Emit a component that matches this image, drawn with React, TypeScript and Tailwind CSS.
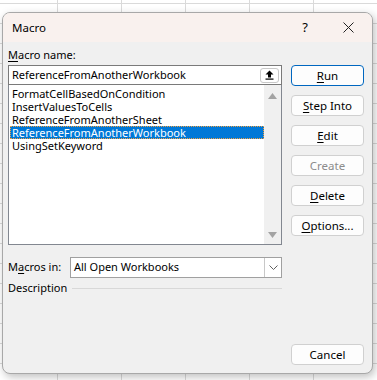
import React from 'react';

const font = { fontFamily: '"Noto Sans", "Segoe UI", Arial, sans-serif' };

function Btn({ label, u, primary, disabled }: { label: string; u?: number; primary?: boolean; disabled?: boolean }) {
  const text =
    u === undefined ? (
      label
    ) : (
      <>
        {label.slice(0, u)}
        <span className="underline underline-offset-2">{label[u]}</span>
        {label.slice(u + 1)}
      </>
    );
  return (
    <div
      className={
        'h-[21px] w-[73px] rounded-[4px] border bg-[#fdfdfd] flex items-center justify-center text-[11.5px] leading-none ' +
        (primary ? 'border-[#0067c0] ' : 'border-[#d0d0d0] ') +
        (disabled ? 'text-[#8c8c8c]' : 'text-black')
      }
    >
      {text}
    </div>
  );
}

const macros = [
  'FormatCellBasedOnCondition',
  'InsertValuesToCells',
  'ReferenceFromAnotherSheet',
  'ReferenceFromAnotherWorkbook',
  'UsingSetKeyword',
];

export default function App() {
  return (
    <div
      style={font}
      className="w-[377px] h-[380px] overflow-hidden bg-white pt-[12px] pl-[2px] bg-[linear-gradient(to_right,#dadada_1px,transparent_1px),linear-gradient(to_bottom,#dadada_1px,transparent_1px)] bg-[size:64px_20px] bg-[position:57px_3px]"
    >
      <div className="w-[371px] h-[362px] rounded-[8px] border border-[#a8a8a8] bg-[#f0f0f0] shadow-[2px_3px_8px_rgba(0,0,0,0.25)] flex flex-col overflow-hidden">
        {/* title bar */}
        <div className="h-[29px] bg-[#f9f1ee] flex items-center pl-[9px] text-[11.5px] text-black shrink-0">
          <span className="pt-[1px]">Macro</span>
          <span className="ml-auto mr-[35px] text-[13px]">?</span>
          <svg width="11" height="11" viewBox="0 0 11 11" className="mr-[18px]">
            <path d="M0.5 0.5 L10.5 10.5 M10.5 0.5 L0.5 10.5" stroke="#222" strokeWidth="1" />
          </svg>
        </div>

        {/* body */}
        <div className="flex flex-1 pl-[5px] text-[11px]">
          <div className="w-[274px] flex flex-col">
            <div className="h-[23px] flex items-center text-black pt-[3px]">
              <span className="underline underline-offset-2">M</span>acro name:
            </div>
            <div className="h-[20px] border border-[#7a7a7a] bg-white flex items-center pl-[3px] text-black">
              <span className="flex-1">ReferenceFromAnotherWorkbook</span>
              <div className="w-[19px] h-[15px] mr-[2px] rounded-[3px] border border-[#c8c8c8] bg-white flex items-center justify-center">
                <svg width="9" height="10" viewBox="0 0 9 10">
                  <path d="M4.5 0.5 L8.5 4.5 L6 4.5 L6 7.5 L3 7.5 L3 4.5 L0.5 4.5 Z" fill="#000" />
                  <rect x="0.5" y="8.5" width="8" height="1.2" fill="#000" />
                </svg>
              </div>
            </div>
            <div className="h-[160px] border border-t-0 border-[#828790] bg-white flex">
              <div className="flex-1 pt-[2px] pl-[1px] text-black">
                {macros.map((m, i) =>
                  i === 3 ? (
                    <div
                      key={m}
                      className="h-[13px] leading-[13px] pl-[2px] bg-[#0078d7] text-white outline outline-1 outline-dotted outline-[#f0a040] -outline-offset-1"
                    >
                      {m}
                    </div>
                  ) : (
                    <div key={m} className="h-[13px] leading-[13px] pl-[2px]">
                      {m}
                    </div>
                  )
                )}
              </div>
              <div className="w-[17px] bg-[#f0f0f0] flex flex-col items-center justify-between pt-[8px] pb-[6px]">
                <svg width="9" height="6" viewBox="0 0 9 6">
                  <path d="M4.5 0 L9 6 L0 6 Z" fill="#a3a3a3" />
                </svg>
                <svg width="9" height="6" viewBox="0 0 9 6">
                  <path d="M0 0 L9 0 L4.5 6 Z" fill="#a3a3a3" />
                </svg>
              </div>
            </div>

            <div className="mt-[12px] flex items-center h-[21px] text-black">
              <span className="w-[62px]">
                M<span className="underline underline-offset-2">a</span>cros in:
              </span>
              <div className="flex-1 h-[21px] border border-[#a0a0a0] bg-white flex items-center pl-[3px]">
                <span className="flex-1">All Open Workbooks</span>
                <div className="w-[17px] h-full border-l border-[#c8c8c8] flex items-center justify-center">
                  <svg width="9" height="5" viewBox="0 0 9 5">
                    <path d="M0.5 0.5 L4.5 4.5 L8.5 0.5" stroke="#606060" fill="none" strokeWidth="1" />
                  </svg>
                </div>
              </div>
            </div>
            <div className="mt-[2px] flex items-center text-black">
              <span>Description</span>
              <div className="flex-1 ml-[5px] h-px bg-[#d8d8d8] mt-[1px]" />
            </div>
          </div>

          <div className="ml-[9px] flex flex-col pt-[23px] pb-[8px]">
            <div className="flex flex-col gap-[9px]">
              <Btn label="Run" u={0} primary />
              <Btn label="Step Into" u={0} />
              <Btn label="Edit" u={0} />
              <Btn label="Create" disabled />
              <Btn label="Delete" u={0} />
              <Btn label="Options..." u={0} />
            </div>
            <div className="mt-auto">
              <Btn label="Cancel" />
            </div>
          </div>
        </div>
      </div>
    </div>
  );
}
